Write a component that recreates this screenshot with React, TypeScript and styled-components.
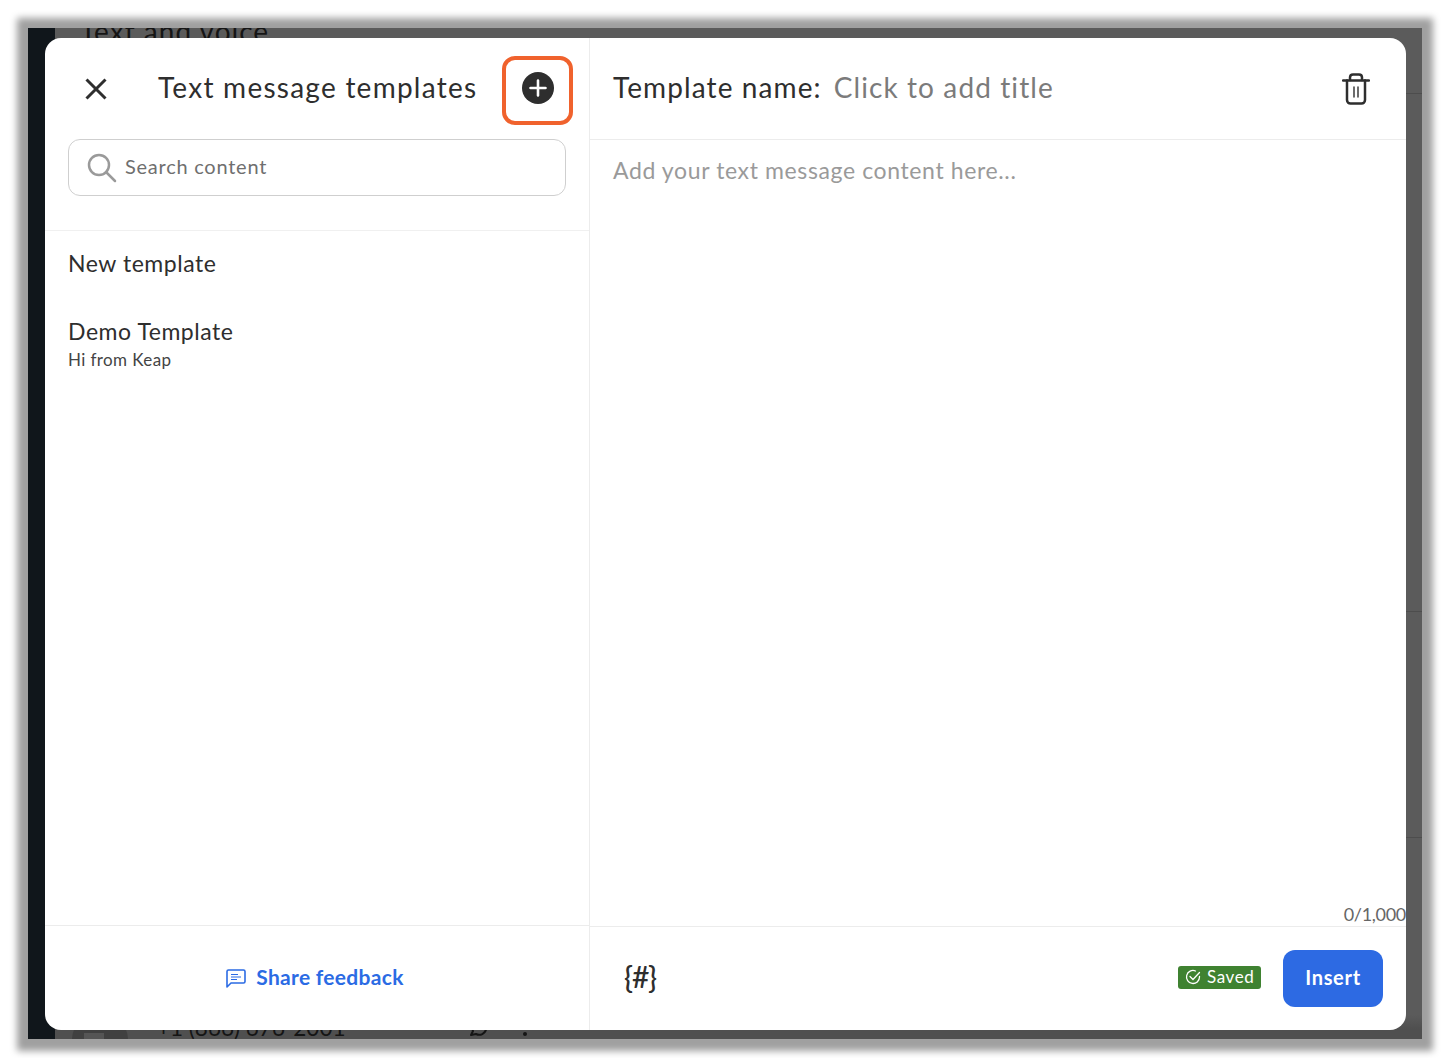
import React from 'react'
import styled, { createGlobalStyle } from 'styled-components'

const GlobalStyle = createGlobalStyle`
  html, body {
    margin: 0;
    background: #fff;
    font-family: 'Lato', 'Liberation Sans', sans-serif;
    color: #2e2e2e;
  }
  * { box-sizing: border-box; }
`

const Page = styled.div`
  width: 1452px;
  height: 1058px;
  padding: 28px 30px 19px 28px;
`

const Frame = styled.div`
  position: relative;
  height: 1011px;
  overflow: hidden;
  display: flex;
  background: #5b5b5b;
`

const FrameShadow = styled.div`
  box-shadow: 0 1px 7px 11px #a0a0a0;
`

const DarkRail = styled.div`
  width: 27px;
  background: #10161b;
`

const Behind = styled.div`
  flex: 1;
  display: flex;
  flex-direction: column;
  color: #151515;
`

const BehindSection = styled.div<{ $height: number }>`
  height: ${(p) => p.$height}px;
  padding-left: 25px;
  border-bottom: 1px solid #4d4d4d;
`

const BehindTitle = styled.div`
  margin-top: -14px;
  font-size: 28px;
  line-height: 34px;
  letter-spacing: 1px;
`

const BehindBottom = styled.div`
  flex: 1;
  display: flex;
  align-items: flex-end;
  padding: 0 0 0 17px;
  background: linear-gradient(#5b5b5b 88%, #4f4f4f 95%);
  font-size: 22.5px;
  line-height: 24px;
`

const BehindAvatar = styled.div`
  width: 56px;
  height: 56px;
  margin-bottom: -29px;
  padding: 21px 0 0 12px;
  border-radius: 50%;
  background: #404040;

  &::after {
    content: '';
    display: block;
    width: 20px;
    height: 20px;
    background: #555;
  }
`

const BehindPhone = styled.span`
  width: 313px;
  margin: 0 0 -1px 29px;
`

const BehindIcons = styled.span`
  display: flex;
  align-items: flex-end;
  gap: 35px;
  margin-bottom: 3px;
`

const Modal = styled.div`
  position: absolute;
  top: 10px;
  left: 17px;
  width: 1361px;
  height: 992px;
  display: grid;
  grid-template-columns: 545px 1fr;
  background: #fff;
  border-radius: 16px;
  overflow: hidden;
`

const Column = styled.section<{ $divided?: boolean }>`
  display: flex;
  flex-direction: column;
  min-height: 0;
  ${(p) => (p.$divided ? 'border-right: 1px solid #ececec;' : '')}
`

const LeftHeader = styled.header`
  height: 101px;
  display: flex;
  align-items: center;
  padding: 0 16px 0 39px;
`

const TitleText = styled.h1`
  flex: 1;
  margin: 0 0 4px 50px;
  font-size: 28px;
  font-weight: 400;
  letter-spacing: 1.25px;
  white-space: nowrap;
`

const IconButton = styled.button`
  display: flex;
  align-items: center;
  justify-content: center;
  padding: 0;
  border: 0;
  background: none;
`

const AddButton = styled(IconButton)`
  width: 71px;
  height: 69px;
  margin-top: 3px;
  padding-bottom: 4px;
  border: 4px solid #f0622d;
  border-radius: 13px;
`

const SearchWrap = styled.div`
  padding: 0 23px 34px;
  border-bottom: 1px solid #f0f0f0;
`

const SearchBox = styled.div`
  height: 57px;
  display: flex;
  align-items: center;
  gap: 8px;
  padding-left: 18px;
  border: 1px solid #cfcfcf;
  border-radius: 12px;
  font-size: 20px;
  letter-spacing: 0.75px;
  color: #6f6f6f;
`

const SearchLabel = styled.span`
  margin-bottom: 4px;
`

const TemplateList = styled.ul`
  flex: 1;
  margin: 0;
  padding: 18px 23px 0;
  list-style: none;
`

const TemplateItem = styled.li`
  margin-bottom: 40px;
`

const TemplateName = styled.div`
  font-size: 23px;
  line-height: 28px;
  letter-spacing: 0.55px;
`

const TemplatePreview = styled.div`
  margin-top: 5px;
  font-size: 17px;
  line-height: 20px;
  letter-spacing: 0.4px;
  color: #444;
`

const Footer = styled.footer`
  height: 105px;
  display: flex;
  align-items: center;
  border-top: 1px solid #ececec;
`

const LeftFooter = styled(Footer)`
  justify-content: center;
  gap: 10px;
  padding-right: 4px;
  color: #2b6be4;
  font-size: 21px;
  font-weight: 700;
  letter-spacing: 0.3px;
`

const FooterLabel = styled.span`
  margin-bottom: 4px;
`

const RightFooter = styled(Footer)`
  height: 104px;
  padding: 0 23px 0 34px;
`

const Variable = styled.span`
  flex: 1;
  margin-bottom: 6px;
  font-size: 30px;
  font-weight: 500;
  line-height: 36px;
  letter-spacing: -1.2px;
`

const SavedBadge = styled.span`
  width: 83px;
  height: 23px;
  display: flex;
  align-items: center;
  gap: 6px;
  margin: 0 22px 3px 0;
  padding-left: 7px;
  border-radius: 3px;
  background: #3f8231;
  color: #fff;
  font-size: 17px;
  letter-spacing: 0.6px;
`

const SavedLabel = styled.span`
  margin-bottom: 2px;
`

const InsertButton = styled.button`
  width: 100px;
  height: 57px;
  padding: 0 0 4px;
  border: 0;
  border-radius: 12px;
  background: #2d6ae3;
  color: #fff;
  font-family: inherit;
  font-size: 20px;
  font-weight: 700;
  letter-spacing: 0.7px;
`

const RightHeader = styled.header`
  height: 102px;
  display: flex;
  align-items: center;
  gap: 12px;
  padding: 0 36px 0 23px;
  border-bottom: 1px solid #ececec;
  font-size: 28px;
  letter-spacing: 1.1px;
`

const HeaderLabel = styled.span`
  margin-bottom: 4px;
`

const TitlePlaceholder = styled(HeaderLabel)`
  flex: 1;
  color: #7b7b7b;
`

const Editor = styled.div`
  flex: 1;
  display: flex;
  flex-direction: column;
  justify-content: space-between;
  padding: 16px 0 1px 23px;
  font-size: 23px;
  letter-spacing: 0.62px;
  color: #9a9a9a;
`

const Counter = styled.div`
  align-self: flex-end;
  font-size: 18px;
  line-height: 22px;
  letter-spacing: -0.3px;
  color: #666;
`

function CloseIcon() {
  return (
    <svg width="24" height="24" viewBox="0 0 24 24" fill="none" stroke="#2e2e2e" strokeWidth="3">
      <path d="M2.5 2.5l19 19M21.5 2.5l-19 19" />
    </svg>
  )
}

function PlusIcon() {
  return (
    <svg width="32" height="32" viewBox="0 0 32 32">
      <circle cx="16" cy="16" r="16" fill="#2e2e2e" />
      <path d="M16 8.500v15M8.500 16h15" stroke="#fff" strokeWidth="2.600" strokeLinecap="round" />
    </svg>
  )
}

function SearchIcon() {
  return (
    <svg width="30" height="30" viewBox="0 0 30 30" fill="none" stroke="#9a9a9a" strokeWidth="2.500">
      <circle cx="12" cy="12" r="10" />
      <path d="M19 19l9 9" strokeLinecap="round" />
    </svg>
  )
}

function TrashIcon() {
  return (
    <svg width="28" height="32" viewBox="0 0 28 32" fill="none" stroke="#2e2e2e" strokeWidth="2.500" strokeLinecap="round">
      <path d="M1 7.500h26" />
      <path d="M8 7V4.500C8 2.500 9.500 1.500 11 1.500h6c1.500 0 3 1 3 3V7" />
      <path d="M5 7.500V27c0 2 1.500 3.500 3.500 3.500h11c2 0 3.500-1.500 3.500-3.500V7.500" />
      <path d="M12 14v10M16 14v10" strokeWidth="1.400" />
    </svg>
  )
}

function FeedbackIcon() {
  return (
    <svg width="20" height="19" viewBox="0 0 20 19" fill="none" stroke="#2b6be4" strokeWidth="1.600">
      <path d="M1 18V2.500C1 1.500 1.500 1 2.500 1h15c1 0 1.500.5 1.500 1.500v10c0 1-.5 1.500-1.500 1.500H5z" strokeLinejoin="round" />
      <path d="M5 5.500h7M5 8h10M5 10.500h6" strokeWidth="1.200" />
    </svg>
  )
}

function CheckCircleIcon() {
  return (
    <svg width="16" height="16" viewBox="0 0 16 16" fill="none" stroke="#fff" strokeWidth="1.300" strokeLinecap="round">
      <path d="M14.500 7.500V8A6.500 6.500 0 1 1 10.500 2" />
      <path d="M5 7.500l3 3 6.500-7" />
    </svg>
  )
}

function BehindChatIcon() {
  return (
    <svg width="18" height="16" viewBox="0 0 18 16" fill="none" stroke="#151515" strokeWidth="2">
      <path d="M1 15l2-4a7 7 0 1 1 3 3z" strokeLinejoin="round" />
    </svg>
  )
}

function BehindDotIcon() {
  return (
    <svg width="4" height="4" viewBox="0 0 4 4">
      <circle cx="2" cy="2" r="2" fill="#151515" />
    </svg>
  )
}

export default function App() {
  return (
    <Page>
      <GlobalStyle />
      <FrameShadow>
        <Frame>
          <DarkRail />
          <Behind>
            <BehindSection $height={66}>
              <BehindTitle>Text and voice</BehindTitle>
            </BehindSection>
            <BehindSection $height={518} />
            <BehindSection $height={226} />
            <BehindBottom>
              <BehindAvatar />
              <BehindPhone>+1 (866) 676-2001</BehindPhone>
              <BehindIcons>
                <BehindChatIcon />
                <BehindDotIcon />
              </BehindIcons>
            </BehindBottom>
          </Behind>
          <Modal>
            <Column $divided>
              <LeftHeader>
                <IconButton aria-label="Close">
                  <CloseIcon />
                </IconButton>
                <TitleText>Text message templates</TitleText>
                <AddButton aria-label="Add template">
                  <PlusIcon />
                </AddButton>
              </LeftHeader>
              <SearchWrap>
                <SearchBox>
                  <SearchIcon />
                  <SearchLabel>Search content</SearchLabel>
                </SearchBox>
              </SearchWrap>
              <TemplateList>
                <TemplateItem>
                  <TemplateName>New template</TemplateName>
                </TemplateItem>
                <TemplateItem>
                  <TemplateName>Demo Template</TemplateName>
                  <TemplatePreview>Hi from Keap</TemplatePreview>
                </TemplateItem>
              </TemplateList>
              <LeftFooter>
                <FeedbackIcon />
                <FooterLabel>Share feedback</FooterLabel>
              </LeftFooter>
            </Column>
            <Column>
              <RightHeader>
                <HeaderLabel>Template name:</HeaderLabel>
                <TitlePlaceholder>Click to add title</TitlePlaceholder>
                <TrashIcon />
              </RightHeader>
              <Editor>
                <span>Add your text message content here...</span>
                <Counter>0/1,000</Counter>
              </Editor>
              <RightFooter>
                <Variable>{'{#}'}</Variable>
                <SavedBadge>
                  <CheckCircleIcon />
                  <SavedLabel>Saved</SavedLabel>
                </SavedBadge>
                <InsertButton>Insert</InsertButton>
              </RightFooter>
            </Column>
          </Modal>
        </Frame>
      </FrameShadow>
    </Page>
  )
}
